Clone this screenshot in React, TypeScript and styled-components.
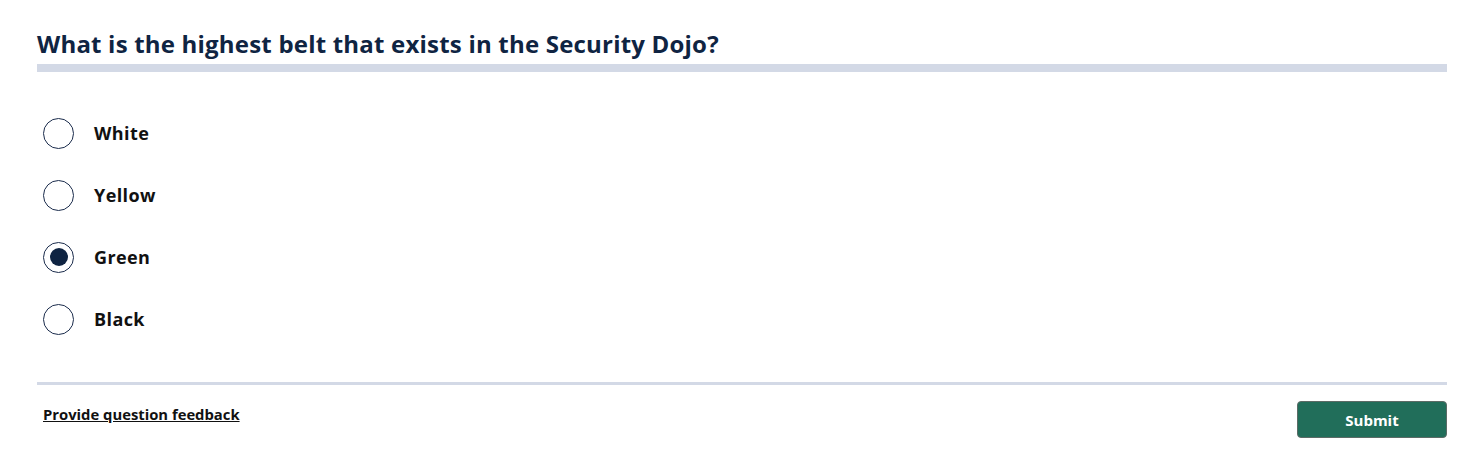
import React, { useState } from "react";
import styled, { createGlobalStyle } from "styled-components";

const Global = createGlobalStyle`
  html, body { margin: 0; padding: 0; background: #ffffff; }
  body { font-family: "Open Sans", "Noto Sans", sans-serif; }
`;

const Page = styled.div`
  width: 1410px;
  padding: 28px 27px 0 37px;
`;

const Title = styled.h2`
  margin: 0;
  font-size: 24px;
  line-height: 32px;
  font-weight: 700;
  color: #0f2442;
  letter-spacing: 0.2px;
  padding-bottom: 4px;
  border-bottom: 8px solid #d3d9e6;
`;

const Options = styled.div`
  display: flex;
  flex-direction: column;
  gap: 30px;
  padding: 45px 0 47px 6px;
  border-bottom: 3px solid #d3d9e6;
`;

const OptionRow = styled.label`
  display: flex;
  align-items: center;
  gap: 20px;
  height: 32px;
  cursor: pointer;
`;

const Radio = styled.span<{ $checked: boolean }>`
  box-sizing: border-box;
  width: 31px;
  height: 31px;
  border-radius: 50%;
  border: 1.5px solid #1b2c4c;
  display: flex;
  align-items: center;
  justify-content: center;
  &::after {
    content: "";
    width: 18px;
    height: 18px;
    border-radius: 50%;
    background: #0f2442;
    display: ${(p) => (p.$checked ? "block" : "none")};
  }
`;

const OptionText = styled.span`
  font-size: 18px;
  font-weight: 700;
  color: #111111;
  letter-spacing: 0.4px;
`;

const Footer = styled.div`
  display: flex;
  justify-content: space-between;
  align-items: flex-start;
  padding: 15px 0 0 6px;
`;

const FeedbackLink = styled.a`
  font-size: 14.8px;
  font-weight: 700;
  color: #111111;
  text-decoration: underline;
  line-height: 25px;
  margin-top: 2px;
`;

const SubmitButton = styled.button`
  width: 150px;
  height: 37px;
  margin-top: 1px;
  border-radius: 4px;
  border: 1px solid #5c6b66;
  background: #216e5a;
  color: #ffffff;
  font-family: inherit;
  font-size: 15px;
  font-weight: 700;
  cursor: pointer;
`;

const options = ["White", "Yellow", "Green", "Black"];

export default function App() {
  const [selected, setSelected] = useState("Green");
  return (
    <>
      <Global />
      <Page>
        <Title>What is the highest belt that exists in the Security Dojo?</Title>
        <Options>
          {options.map((o) => (
            <OptionRow key={o} onClick={() => setSelected(o)}>
              <Radio $checked={selected === o} />
              <OptionText>{o}</OptionText>
            </OptionRow>
          ))}
        </Options>
        <Footer>
          <FeedbackLink href="#">Provide question feedback</FeedbackLink>
          <SubmitButton>Submit</SubmitButton>
        </Footer>
      </Page>
    </>
  );
}
